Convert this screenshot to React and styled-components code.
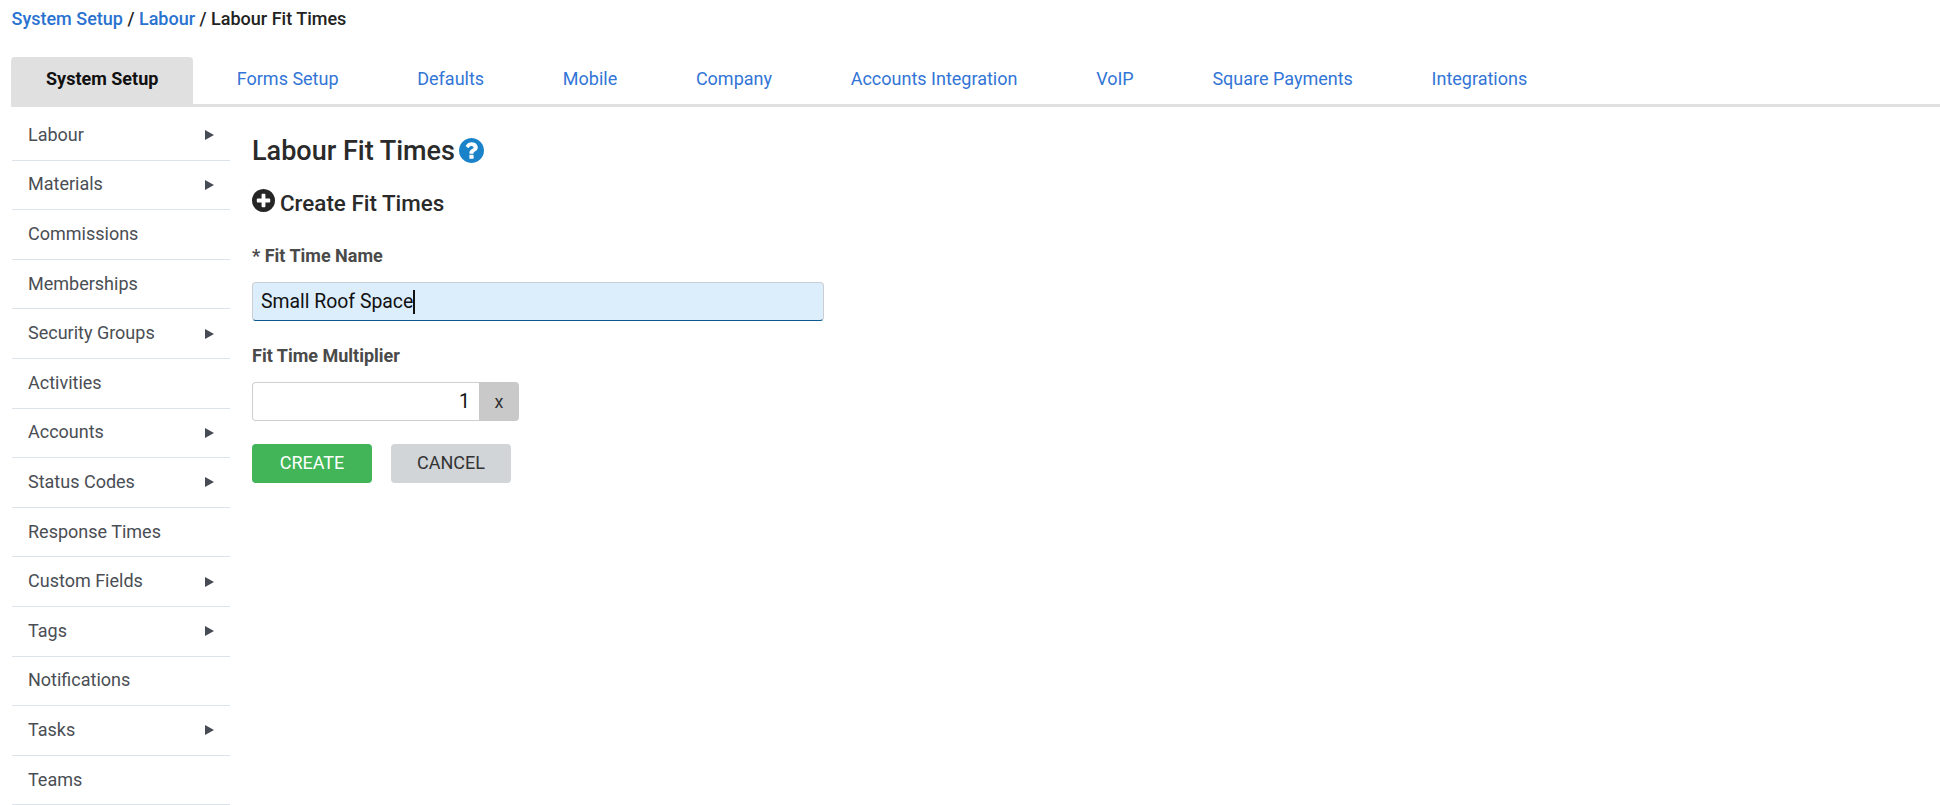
import React from "react";
import styled, { createGlobalStyle } from "styled-components";

const GlobalStyle = createGlobalStyle`
  html, body {
    margin: 0;
    padding: 0;
    background: #fff;
    font-family: Roboto, "Liberation Sans", sans-serif;
    overflow: hidden;
  }
  * { box-sizing: border-box; }
`;

const Page = styled.div`
  width: 1940px;
  height: 805px;
  overflow: hidden;
`;

const Breadcrumb = styled.div`
  height: 57px;
  padding: 8px 0 0 11.5px;
  font-size: 18px;
  font-weight: 500;
  line-height: 22px;
  color: #222;
  a { color: #2a72d0; text-decoration: none; }
`;

const TabBar = styled.div`
  display: flex;
  height: 50px;
  margin-left: 11px;
  border-bottom: 3px solid #e0e0e0;
`;

const Tab = styled.div`
  display: flex;
  align-items: center;
  height: ${(p) => (p.$active ? "50px" : "47px")};
  padding: 0 ${(p) => (p.$active ? "35px 7px" : "39.35px 4px")};
  margin-right: ${(p) => (p.$active ? "4px" : "0")};
  font-size: 18px;
  font-weight: ${(p) => (p.$active ? 700 : 400)};
  color: ${(p) => (p.$active ? "#111" : "#3275d6")};
  background: ${(p) => (p.$active ? "#e0e0e0" : "transparent")};
  border-radius: 4px 4px 0 0;
`;

const Main = styled.div`
  display: flex;
  margin-top: 4px;
`;

const Sidebar = styled.ul`
  list-style: none;
  width: 218px;
  margin: 0 0 0 12px;
  padding: 0;
`;

const SideItem = styled.li`
  display: flex;
  align-items: center;
  justify-content: space-between;
  height: 49.6px;
  padding: 0 16px 2px;
  font-size: 18px;
  color: #4a4e54;
  border-bottom: 1.5px solid #dde3ea;
`;

const Arrow = styled.span`
  width: 0;
  height: 0;
  margin-top: 2px;
  border-left: 9.5px solid #474c54;
  border-top: 5.5px solid transparent;
  border-bottom: 5.5px solid transparent;
`;

const Content = styled.div`
  padding: 26px 0 0 22px;
`;

const TitleRow = styled.div`
  display: flex;
  align-items: center;
  gap: 4px;
  height: 28px;
`;

const Title = styled.h1`
  margin: 0;
  font-size: 27px;
  font-weight: 500;
  color: #2a2a2a;
`;

const SubtitleRow = styled.div`
  display: flex;
  align-items: center;
  gap: 5px;
  height: 28px;
  margin-top: 24px;
`;

const Subtitle = styled.h2`
  margin: 0;
  font-size: 22.4px;
  font-weight: 500;
  color: #2a2a2a;
`;

const IconSvg = styled.svg`
  flex: none;
  margin-bottom: ${(p) => p.$lift || 0}px;
`;

const Label = styled.label`
  display: block;
  margin-top: ${(p) => p.$top}px;
  font-size: 18px;
  line-height: 22px;
  font-weight: 700;
  color: #4a4a4a;
`;

const NameField = styled.div`
  display: flex;
  align-items: center;
  width: 572px;
  height: 39px;
  margin-top: 15px;
  padding-left: 8px;
  font-size: 19.4px;
  color: #111;
  background: #dceefc;
  border: 1.5px solid #cbcfd3;
  border-bottom: 1.5px solid #0a5a8c;
  border-radius: 4px;
`;

const Caret = styled.span`
  width: 2px;
  height: 24px;
  background: #111;
`;

const AddonGroup = styled.div`
  display: flex;
  width: 267px;
  height: 39px;
  margin-top: 15px;
`;

const NumberInput = styled.input`
  flex: 1;
  min-width: 0;
  padding: 0 9px 0 0;
  font: inherit;
  font-size: 19.4px;
  text-align: right;
  color: #111;
  background: #fff;
  border: 1.5px solid #cfcfcf;
  border-right: none;
  border-radius: 4px 0 0 4px;
  outline: none;
`;

const Addon = styled.span`
  display: flex;
  align-items: center;
  justify-content: center;
  width: 40px;
  font-size: 18px;
  color: #333;
  background: #c9c9c9;
  border-radius: 0 4px 4px 0;
`;

const Actions = styled.div`
  display: flex;
  gap: 19px;
  margin-top: 23px;
`;

const Button = styled.button`
  width: 120px;
  height: 39px;
  padding: 0 0 2px;
  font: inherit;
  font-size: 18px;
  color: ${(p) => (p.$primary ? "#fff" : "#333")};
  background: ${(p) => (p.$primary ? "#41b558" : "#d1d5d8")};
  border: none;
  border-radius: 4px;
`;

const HelpIcon = () => (
  <IconSvg $lift={2} width="25" height="25" viewBox="128 128 1536 1536">
    <path
      fill="#1a82c8"
      d="M1024 1376v-192q0-14-9-23t-23-9h-192q-14 0-23 9t-9 23v192q0 14 9 23t23 9h192q14 0 23-9t9-23zm256-672q0-88-55.500-163t-138.500-116-170-41q-243 0-371 213-15 24 8 42l132 100q7 6 19 6 16 0 25-12 53-68 86-92 34-24 86-24 48 0 85.500 26t37.500 59q0 38-20 61t-68 45q-63 28-115.500 86.500t-52.500 125.500v36q0 14 9 23t23 9h192q14 0 23-9t9-23q0-19 21.500-49.500t54.500-49.500q32-18 49-28.500t46-35 44.500-48 28-60.500 12.500-81zm384 192q0 209-103 385.500t-279.500 279.500-385.500 103-385.500-103-279.500-279.500-103-385.500 103-385.500 279.500-279.500 385.500-103 385.500 103 279.500 279.500 103 385.500z"
    />
  </IconSvg>
);

const PlusIcon = () => (
  <IconSvg $lift={5} width="23" height="23" viewBox="128 128 1536 1536">
    <path
      fill="#262626"
      d="M1344 960v-128q0-26-19-45t-45-19h-256v-256q0-26-19-45t-45-19h-128q-26 0-45 19t-19 45v256h-256q-26 0-45 19t-19 45v128q0 26 19 45t45 19h256v256q0 26 19 45t45 19h128q26 0 45-19t19-45v-256h256q26 0 45-19t19-45zm320-64q0 209-103 385.500t-279.500 279.500-385.500 103-385.500-103-279.500-279.500-103-385.500 103-385.500 279.500-279.500 385.500-103 385.500 103 279.500 279.500 103 385.500z"
    />
  </IconSvg>
);

const tabs = [
  "Forms Setup",
  "Defaults",
  "Mobile",
  "Company",
  "Accounts Integration",
  "VoIP",
  "Square Payments",
  "Integrations",
];

const menu = [
  ["Labour", true],
  ["Materials", true],
  ["Commissions"],
  ["Memberships"],
  ["Security Groups", true],
  ["Activities"],
  ["Accounts", true],
  ["Status Codes", true],
  ["Response Times"],
  ["Custom Fields", true],
  ["Tags", true],
  ["Notifications"],
  ["Tasks", true],
  ["Teams"],
];

export default function App() {
  return (
    <Page>
      <GlobalStyle />
      <Breadcrumb>
        <a href="#setup">System Setup</a> / <a href="#labour">Labour</a> / Labour Fit Times
      </Breadcrumb>
      <TabBar>
        <Tab $active>System Setup</Tab>
        {tabs.map((t) => (
          <Tab key={t}>{t}</Tab>
        ))}
      </TabBar>
      <Main>
        <Sidebar>
          {menu.map(([name, sub]) => (
            <SideItem key={name}>
              {name}
              {sub && <Arrow />}
            </SideItem>
          ))}
        </Sidebar>
        <Content>
          <TitleRow>
            <Title>Labour Fit Times</Title>
            <HelpIcon />
          </TitleRow>
          <SubtitleRow>
            <PlusIcon />
            <Subtitle>Create Fit Times</Subtitle>
          </SubtitleRow>
          <Label $top={28}>* Fit Time Name</Label>
          <NameField>
            Small Roof Space
            <Caret />
          </NameField>
          <Label $top={24}>Fit Time Multiplier</Label>
          <AddonGroup>
            <NumberInput defaultValue="1" />
            <Addon>x</Addon>
          </AddonGroup>
          <Actions>
            <Button $primary>CREATE</Button>
            <Button>CANCEL</Button>
          </Actions>
        </Content>
      </Main>
    </Page>
  );
}
